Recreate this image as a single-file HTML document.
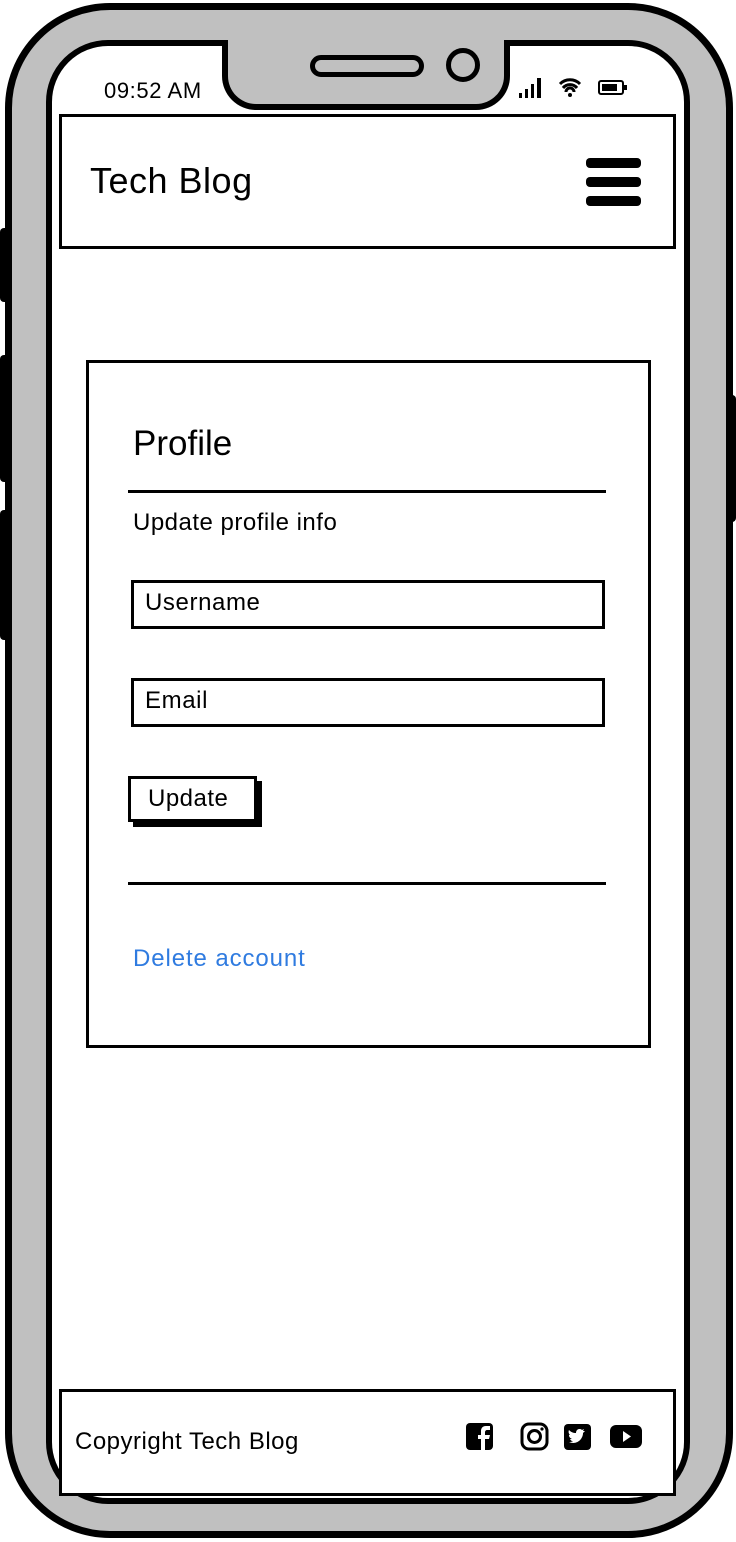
<!DOCTYPE html>
<html><head><style>
*{margin:0;padding:0;box-sizing:border-box}
body{width:736px;height:1542px;background:#fff;position:relative;overflow:hidden;font-family:"Liberation Sans",sans-serif;color:#000}
.a{position:absolute;white-space:nowrap}
.btn{background:#000;border-radius:4px}
</style></head><body>
<div class="a btn" style="left:0;top:228px;width:10px;height:74px"></div>
<div class="a btn" style="left:0;top:355px;width:10px;height:127px"></div>
<div class="a btn" style="left:0;top:510px;width:10px;height:130px"></div>
<div class="a btn" style="left:726px;top:395px;width:10px;height:127px"></div>
<div class="a" style="left:5px;top:3px;width:728px;height:1535px;background:#c0c0c0;border:7px solid #000;border-radius:105px"></div>
<div class="a" style="left:46px;top:40px;width:644px;height:1464px;background:#fff;border:6px solid #000;border-radius:62px"></div>
<div class="a" style="left:222px;top:40px;width:288px;height:70px;background:#c0c0c0;border:6px solid #000;border-top:none;border-radius:0 0 34px 34px"></div>
<div class="a" style="left:228px;top:38px;width:276px;height:10px;background:#c0c0c0"></div>
<div class="a" style="left:310px;top:55px;width:114px;height:22px;border:5px solid #000;border-radius:11px;background:#c0c0c0"></div>
<div class="a" style="left:446px;top:48px;width:34px;height:34px;border:5px solid #000;border-radius:50%;background:#c0c0c0"></div>
<div class="a" style="left:104px;top:78px;font-size:22px;letter-spacing:0.6px">09:52 AM</div>
<svg class="a" style="left:518px;top:74px" width="112" height="26">
<rect x="1" y="19" width="3" height="5"/><rect x="7" y="15" width="3" height="9"/><rect x="13" y="10" width="3" height="14"/><rect x="19" y="4" width="4" height="20"/>
<path d="M42 10a14 14 0 0 1 20 0M45 14a9 9 0 0 1 14 0M48 18a4 4 0 0 1 8 0" stroke="#000" stroke-width="3" fill="none"/><circle cx="52" cy="21" r="2"/>
<rect x="81" y="7" width="24" height="13" rx="2" fill="none" stroke="#000" stroke-width="2"/><rect x="84" y="10" width="15" height="7"/><rect x="106" y="11" width="3" height="5"/>
</svg>
<div class="a" style="left:59px;top:114px;width:617px;height:135px;border:3px solid #000;background:#fff"></div>
<div class="a" style="left:90px;top:160px;font-size:36px;letter-spacing:0.5px">Tech Blog</div>
<div class="a btn" style="left:586px;top:158px;width:55px;height:10px"></div>
<div class="a btn" style="left:586px;top:177px;width:55px;height:10px"></div>
<div class="a btn" style="left:586px;top:196px;width:55px;height:10px"></div>
<div class="a" style="left:86px;top:360px;width:565px;height:688px;border:3px solid #000"></div>
<div class="a" style="left:133px;top:424px;font-size:35px">Profile</div>
<div class="a" style="left:128px;top:490px;width:478px;height:3px;background:#000"></div>
<div class="a" style="left:133px;top:509px;font-size:24px;letter-spacing:0.5px">Update profile info</div>
<div class="a" style="left:131px;top:580px;width:474px;height:49px;border:3px solid #000"></div>
<div class="a" style="left:145px;top:589px;font-size:24px;letter-spacing:0.6px">Username</div>
<div class="a" style="left:131px;top:678px;width:474px;height:49px;border:3px solid #000"></div>
<div class="a" style="left:145px;top:687px;font-size:24px;letter-spacing:0.6px">Email</div>
<div class="a" style="left:133px;top:781px;width:129px;height:46px;background:#000"></div>
<div class="a" style="left:128px;top:776px;width:129px;height:46px;border:3px solid #000;background:#fff"></div>
<div class="a" style="left:148px;top:785px;font-size:24px;letter-spacing:0.5px">Update</div>
<div class="a" style="left:128px;top:882px;width:478px;height:3px;background:#000"></div>
<div class="a" style="left:133px;top:945px;font-size:24px;letter-spacing:0.9px;color:#2f7be0">Delete account</div>
<div class="a" style="left:59px;top:1389px;width:617px;height:107px;border:3px solid #000;background:#fff"></div>
<div class="a" style="left:75px;top:1428px;font-size:24px;letter-spacing:0.5px">Copyright Tech Blog</div>
<svg class="a" style="left:465px;top:1422px" width="180" height="30">
<rect x="1" y="1" width="27" height="27" rx="4"/><path d="M20 28V17h4l1-4h-5v-3c0-1 1-2 2-2h3V4h-4c-4 0-5 3-5 5v4h-3v4h3v11z" fill="#fff"/>
<rect x="57" y="2" width="25" height="25" rx="7" fill="none" stroke="#000" stroke-width="3"/><circle cx="69.5" cy="14.5" r="6" fill="none" stroke="#000" stroke-width="3"/><circle cx="77" cy="7" r="1.6"/>
<rect x="99" y="2" width="27" height="26" rx="4"/><path d="M104 20c4 2 9 1 12-3 2-3 2-5 2-6l2-2-2 0 1-2-2 1c-2-2-6-1-6 3-3 0-5-1-7-3-1 2 0 4 1 5h-1c0 2 1 3 3 4h-2c1 2 2 2 3 2-1 1-3 1-4 1z" fill="#fff"/>
<rect x="145" y="3" width="32" height="23" rx="6"/><path d="M158 9v11l8-5.5z" fill="#fff"/>
</svg>
</body></html>
